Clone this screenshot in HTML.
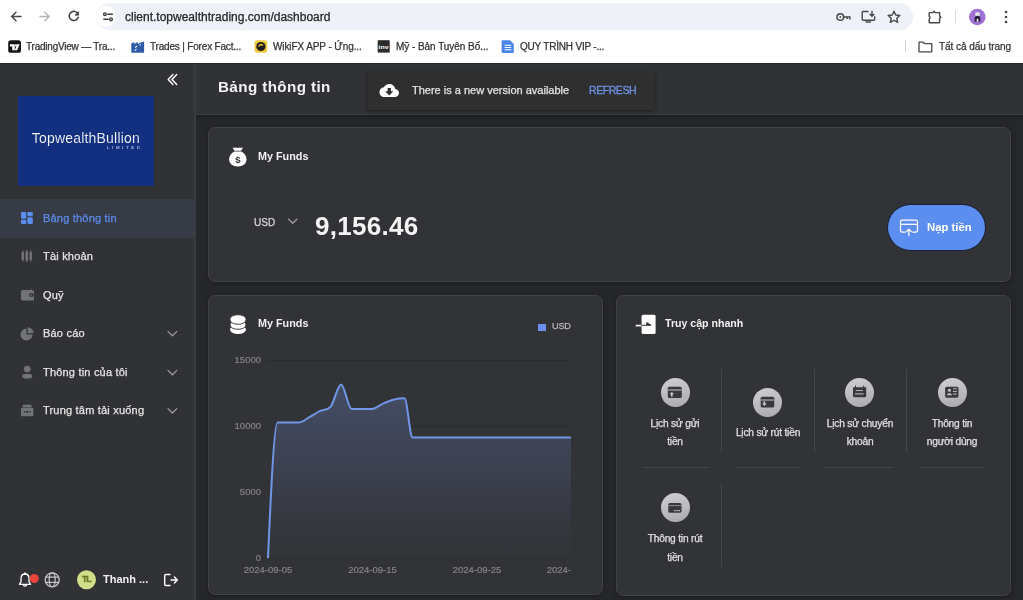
<!DOCTYPE html>
<html><head><meta charset="utf-8">
<style>
*{box-sizing:border-box;margin:0;padding:0}
html,body{width:1023px;height:600px;overflow:hidden}
body{position:relative;background:#26272b;font-family:"Liberation Sans",sans-serif;color:#fff}
.a{position:absolute}
.t{position:absolute;line-height:1;white-space:nowrap;will-change:transform;-webkit-text-stroke:0.25px currentColor}
.t[style*="font-weight:700"]{-webkit-text-stroke:0}
svg{position:absolute;overflow:visible}
</style></head><body>
<!-- ===== Browser chrome ===== -->
<div class="a" style="left:0;top:0;width:1023px;height:63px;background:#ffffff"></div>
<!-- nav buttons -->
<svg style="left:0;top:0" width="90" height="32" viewBox="0 0 90 32">
  <path d="M21 16.5H11.8M16 12.2l-4.3 4.3 4.3 4.3" fill="none" stroke="#474747" stroke-width="1.5" stroke-linecap="round" stroke-linejoin="round"/>
  <path d="M40 16.5h9.2M44.8 12.2l4.3 4.3-4.3 4.3" fill="none" stroke="#b4b4b4" stroke-width="1.5" stroke-linecap="round" stroke-linejoin="round"/>
  <path d="M78.2 17.3a4.6 4.6 0 1 1-1.1-4.6" fill="none" stroke="#474747" stroke-width="1.6" stroke-linecap="round"/>
  <path d="M78.6 11.6v3.6h-3.6z" fill="#474747" stroke="#474747" stroke-width="0.8" stroke-linejoin="round"/>
</svg>
<!-- url pill -->
<div class="a" style="left:96px;top:3px;width:817px;height:27px;border-radius:14px;background:#eef1f7"></div>
<div class="a" style="left:95.7px;top:6.2px;width:20.8px;height:20.8px;border-radius:50%;background:#fff"></div>
<svg style="left:0;top:0" width="120" height="32" viewBox="0 0 120 32">
  <circle cx="104.9" cy="14.2" r="1.35" fill="none" stroke="#3c3c3c" stroke-width="1.4"/>
  <path d="M107.8 14.2h4.6M103.8 19.3h4.4" stroke="#3c3c3c" stroke-width="1.4" stroke-linecap="round"/>
  <circle cx="111" cy="19.3" r="1.4" fill="none" stroke="#3c3c3c" stroke-width="1.4"/>
</svg>
<div class="t" style="left:124.6px;top:11px;font-size:12px;color:#1f1f1f">client.topwealthtrading.com/dashboard</div>
<!-- right toolbar icons -->
<svg style="left:820px;top:0" width="203" height="32" viewBox="820 0 203 32">
  <!-- key -->
  <circle cx="840.3" cy="17" r="3.3" fill="none" stroke="#474747" stroke-width="1.5"/>
  <circle cx="840.3" cy="17" r="0.9" fill="#474747"/>
  <path d="M843.6 17h6.2v2.6M847.2 17v2" fill="none" stroke="#474747" stroke-width="1.5"/>
  <!-- install -->
  <path d="M868.5 11.5h-5.3a1 1 0 0 0-1 1v6.8a1 1 0 0 0 1 1h10.5a1 1 0 0 0 1-1v-3" fill="none" stroke="#474747" stroke-width="1.4"/>
  <path d="M865.5 22h5.5" stroke="#474747" stroke-width="1.4"/>
  <path d="M872 10.8v5.4M869.8 14l2.2 2.2 2.2-2.2" fill="none" stroke="#474747" stroke-width="1.4"/>
  <!-- star -->
  <path d="M894 11.2l1.75 3.8 4.1.45-3.05 2.8.85 4.05L894 20.25l-3.65 2.05.85-4.05-3.05-2.8 4.1-.45z" fill="none" stroke="#474747" stroke-width="1.4" stroke-linejoin="round"/>
  <!-- puzzle -->
  <path d="M929.2 12.6h3.6l1.2-1.3 1.2 1.3h4.4v3.4l1.3 1.3-1.3 1.3v3.6a0.6 0.6 0 0 1-.6.6h-9.2a0.6 0.6 0 0 1-.6-.6v-3.2a1.5 1.5 0 0 0 0-2.6v-3.2a0.6 0.6 0 0 1 .6-.6z" fill="none" stroke="#474747" stroke-width="1.4" stroke-linejoin="round"/>
  <path d="M955.5 10v13" stroke="#d6d9de" stroke-width="1"/>
  <!-- avatar -->
  <circle cx="977.3" cy="17" r="8.3" fill="#a072d6"/>
  <circle cx="977.5" cy="14.4" r="2.4" fill="#e4e2ea"/>
  <path d="M974.6 21.8v-3.1a2.9 2.9 0 0 1 5.8 0v3.1z" fill="#2b2140"/>
  <rect x="976.7" y="18.9" width="1.7" height="2.9" fill="#efeff3"/>
  <circle cx="1006" cy="12" r="1.3" fill="#474747"/>
  <circle cx="1006" cy="17" r="1.3" fill="#474747"/>
  <circle cx="1006" cy="22" r="1.3" fill="#474747"/>
</svg>
<!-- bookmarks bar -->
<svg style="left:0;top:0" width="620" height="62" viewBox="0 0 620 62">
  <rect x="8.2" y="40.2" width="12.8" height="12.6" rx="2.6" fill="#131313"/>
  <path d="M9.9 44.3h4.9v5.9h-2.6v-3.6h-2.3z" fill="#fff"/>
  <circle cx="16" cy="45.4" r="1.05" fill="#fff"/>
  <path d="M17.1 44.3h2.6l-2.6 5.9h-2.3z" fill="#fff"/>
  <path d="M131.3 52.8V43.6l3-1.6v1.9l3.6-1.9v1.9l3.6-1.9v0.6l2.6-1.4v11.6z" fill="#2f5ba6"/>
  <path d="M135.2 47.6l1.8-1.6M134.8 50.6l1.6-1.4M139.6 45.4l1.2-1" stroke="#fff" stroke-width="1.1"/>
  <rect x="254.6" y="40.2" width="12.6" height="12.6" rx="3" fill="#f0c93a"/>
  <circle cx="260.9" cy="46.5" r="4.6" fill="#1d1d1d"/>
  <path d="M258.2 46.8a2.8 2.8 0 0 1 5.4-1.2l-1.6.2a1.3 1.3 0 0 0-2.3.8z" fill="#f0c93a"/>
  <rect x="377.7" y="40.2" width="12" height="12.4" fill="#2b2b2b"/>
  <text x="378.6" y="48.6" font-family="Liberation Sans" font-weight="700" font-size="5.4" fill="#fff" textLength="10" lengthAdjust="spacingAndGlyphs">inv</text>
  <path d="M502.6 40.2h7.4l3.8 3.8v8a1 1 0 0 1-1 1h-10.2a1 1 0 0 1-1-1v-10.8a1 1 0 0 1 1-1z" fill="#4a86e8"/>
  <path d="M504.6 45.2h6.6M504.6 47.5h6.6M504.6 49.8h6.6" stroke="#fff" stroke-width="1.1"/>
</svg>
<div class="t" style="left:26px;top:41.6px;font-size:10px;letter-spacing:-0.22px;color:#333">TradingView — Tra...</div>
<div class="t" style="left:150px;top:41.6px;font-size:10px;letter-spacing:-0.18px;color:#333">Trades | Forex Fact...</div>
<div class="t" style="left:272.5px;top:41.6px;font-size:10px;letter-spacing:-0.1px;color:#333">WikiFX APP - Ứng...</div>
<div class="t" style="left:395.5px;top:41.6px;font-size:10px;letter-spacing:-0.05px;color:#333">Mỹ - Bản Tuyên Bố...</div>
<div class="t" style="left:519.5px;top:41.6px;font-size:10px;letter-spacing:-0.2px;color:#333">QUY TRÌNH VIP -...</div>
<div class="a" style="left:905px;top:40px;width:1px;height:12px;background:#d0d4dc"></div>
<svg style="left:918px;top:41px" width="15" height="12" viewBox="0 0 15 12">
  <path d="M1 1.2h4.3l1.4 1.5h7.1v8.1H1z" fill="none" stroke="#474747" stroke-width="1.3" stroke-linejoin="round"/>
</svg>
<div class="t" style="left:938.5px;top:41.6px;font-size:10px;letter-spacing:-0.05px;color:#333">Tất cả dấu trang</div>
<div class="a" style="left:0;top:63px;width:1023px;height:1px;background:#27282b"></div>

<!-- ===== App ===== -->
<!-- sidebar -->
<div class="a" style="left:0;top:64px;width:194px;height:536px;background:#313236"></div>
<div class="a" style="left:194px;top:64px;width:2px;height:536px;background:#3a3b3f"></div>
<svg style="left:160px;top:70px" width="24" height="20" viewBox="160 70 24 20">
  <path d="M172.9 74.6l-4.7 4.9 4.7 4.9M176.7 74.6l-4.7 4.9 4.7 4.9" fill="none" stroke="#fff" stroke-width="1.4" stroke-linecap="round" stroke-linejoin="round"/>
</svg>
<div class="a" style="left:18px;top:96px;width:136px;height:90px;background:#12307f"></div>
<svg style="left:0;top:0" width="194" height="200" viewBox="0 0 194 200">
  <text x="31.8" y="143.2" font-family="Liberation Sans" font-size="14" textLength="108" lengthAdjust="spacing" fill="#ffffff" stroke="#12307f" stroke-width="0.15">TopwealthBullion</text>
  <text x="106.8" y="148.8" font-family="Liberation Sans" font-weight="700" font-size="4.3" textLength="33" lengthAdjust="spacing" fill="#aab3dc">LIMITED</text>
</svg>

<div class="a" style="left:0;top:199px;width:194px;height:39px;background:#373b45"></div>
<!-- nav icons -->
<svg style="left:0;top:0" width="194" height="600" viewBox="0 0 194 600">
  <g fill="#5b8def">
    <rect x="21" y="212" width="5.3" height="6.8" rx="1.2"/>
    <rect x="21" y="219.8" width="5.3" height="4.2" rx="1.2"/>
    <rect x="27.3" y="212" width="5.5" height="4.2" rx="1.2"/>
    <rect x="27.3" y="217.2" width="5.5" height="6.8" rx="1.2"/>
  </g>
  <g fill="#727377">
    <rect x="21.5" y="252" width="2.6" height="8" rx="0.8"/><path d="M22.8 250v12" stroke="#727377" stroke-width="0.8"/>
    <rect x="25.5" y="251" width="2.6" height="10" rx="0.8"/><path d="M26.8 249.5v13" stroke="#727377" stroke-width="0.8"/>
    <rect x="29.5" y="252" width="2.6" height="8" rx="0.8"/><path d="M30.8 250v12" stroke="#727377" stroke-width="0.8"/>
  </g>
  <g fill="#727377">
    <path d="M21 291.5a1.5 1.5 0 0 1 1.5-1.5h8.5l1 -1.5v2h1a1 1 0 0 1 1 1v8a1 1 0 0 1-1 1h-10.5a1.5 1.5 0 0 1-1.5-1.5z"/>
    <rect x="29.5" y="293.2" width="4" height="3.6" rx="1" fill="#313236"/>
    <circle cx="31.3" cy="295" r="0.8"/>
  </g>
  <g fill="#727377">
    <path d="M26.5 328.4a6 6 0 1 0 6 6h-6z"/>
    <path d="M27.7 327.2v6h6a6 6 0 0 0-6-6z"/>
  </g>
  <g fill="#727377">
    <circle cx="27.2" cy="369.1" r="3.3"/>
    <rect x="22.2" y="374.1" width="10" height="4.3" rx="2.15"/>
  </g>
  <g fill="#727377">
    <rect x="22.6" y="404.8" width="9" height="2.2" rx="0.8"/>
    <rect x="21" y="407.6" width="12.4" height="8.7" rx="1.6"/>
    <circle cx="24.6" cy="411.8" r="0.85" fill="#313236"/><rect x="26.2" y="410.9" width="2" height="1.8" fill="#313236"/><circle cx="29.8" cy="411.8" r="0.85" fill="#313236"/>
  </g>
  <g fill="none" stroke="#9a9b9f" stroke-width="1.3" stroke-linecap="round" stroke-linejoin="round">
    <path d="M168 331.4l4.4 4.4 4.4-4.4"/>
    <path d="M168 370.4l4.4 4.4 4.4-4.4"/>
    <path d="M168 408.6l4.4 4.4 4.4-4.4"/>
  </g>
</svg>
<div class="t" style="left:43px;top:212.9px;font-size:11px;letter-spacing:0.2px;color:#5b8def">Bảng thông tin</div>
<div class="t" style="left:43px;top:250.9px;font-size:11px;letter-spacing:0.2px;color:#e6e6e6">Tài khoản</div>
<div class="t" style="left:43px;top:289.9px;font-size:11px;letter-spacing:0.2px;color:#e6e6e6">Quỹ</div>
<div class="t" style="left:43px;top:327.9px;font-size:11px;letter-spacing:0.2px;color:#e6e6e6">Báo cáo</div>
<div class="t" style="left:43px;top:366.9px;font-size:11px;letter-spacing:0.2px;color:#e6e6e6">Thông tin của tôi</div>
<div class="t" style="left:43px;top:404.9px;font-size:11px;letter-spacing:0.2px;color:#e6e6e6">Trung tâm tải xuống</div>

<!-- sidebar bottom -->
<svg style="left:0;top:560px" width="194" height="40" viewBox="0 560 194 40">
  <path d="M25 574c-2.6 0-4 2-4 4.7v3.2l-1.6 2.4h11.2l-1.6-2.4v-3.2c0-2.7-1.4-4.7-4-4.7zM25 572.8v1.2M23.4 584.6a1.6 1.6 0 0 0 3.2 0" fill="none" stroke="#fff" stroke-width="1.3" stroke-linecap="round" stroke-linejoin="round"/>
  <circle cx="34.2" cy="578.5" r="4.6" fill="#e8463c"/>
  <g fill="none" stroke="#c4c4c6" stroke-width="1.3">
    <circle cx="52.2" cy="579.8" r="7"/>
    <ellipse cx="52.2" cy="579.8" rx="3" ry="7"/>
    <path d="M45.5 577.2h13.4M45.5 582.4h13.4"/>
  </g>
  <circle cx="86.5" cy="579.8" r="9.5" fill="#d3de8a"/>
  <path d="M171 580h6M174.4 577l3 3-3 3M170 574.5h-4a1.3 1.3 0 0 0-1.3 1.3v8.4a1.3 1.3 0 0 0 1.3 1.3h4" fill="none" stroke="#fff" stroke-width="1.4" stroke-linecap="round" stroke-linejoin="round"/>
</svg>
<div class="t" style="left:81.8px;top:575.2px;font-size:8.8px;font-weight:700;color:#6b7a28;letter-spacing:-1.1px;-webkit-text-stroke:0.35px #6b7a28">TL</div>
<div class="t" style="left:103px;top:574px;font-size:11px;font-weight:700;color:#f0f0f0">Thanh ...</div>

<!-- header -->
<div class="a" style="left:196px;top:64px;width:827px;height:50px;background:#313236"></div>
<div class="a" style="left:196px;top:114px;width:827px;height:1px;background:#3c3d41"></div>
<div class="a" style="left:196px;top:115px;width:827px;height:5px;background:linear-gradient(#1c1d21,#26272b)"></div>
<div class="t" style="left:218px;top:79.2px;font-size:15.2px;font-weight:700;color:#f4f4f4;letter-spacing:0.4px">Bảng thông tin</div>

<!-- snackbar -->
<div class="a" style="left:367px;top:72px;width:288px;height:38px;border-radius:2px;background:#2f2f30;box-shadow:0 1px 3px rgba(0,0,0,.45)"></div>
<svg style="left:0;top:0" width="1023" height="120" viewBox="0 0 1023 120">
  <path transform="translate(379.5 80.75) scale(0.8125)" d="M19.35 10.04C18.67 6.59 15.64 4 12 4 9.110 4 6.6 5.64 5.35 8.04 2.34 8.36 0 10.91 0 14c0 3.31 2.690 6 6 6h13c2.76 0 5-2.24 5-5 0-2.64-2.05-4.78-4.65-4.96zM17 13l-5 5-5-5h3V9h4v4h3z" fill="#fff"/>
</svg>
<div class="t" style="left:412px;top:84.8px;font-size:11px;color:#e4e4e4">There is a new version available</div>
<div class="t" style="left:588.8px;top:84.6px;font-size:10.6px;color:#6d93e6;letter-spacing:-0.5px;-webkit-text-stroke:0.3px #6d93e6">REFRESH</div>

<!-- card 1 -->
<div class="a" style="left:208px;top:127px;width:803px;height:155px;border-radius:7px;background:#323337;border:1px solid #424347;box-shadow:0 1px 5px rgba(0,0,0,.3)"></div>
<svg style="left:0;top:0" width="300" height="200" viewBox="0 0 300 200">
  <path d="M232.6 147.6c1.4.3 2.6.3 3.4 0 .7.6 2.9.6 3.6 0 .9.3 2 .3 3.4 0l-1.8 3.2h-6.8z" fill="#fff"/>
  <path d="M234.3 151.4h7c3.4 1.6 5.2 4.8 5.2 7.8 0 4.4-3.5 7.2-8.7 7.2s-8.7-2.8-8.7-7.2c0-3 1.8-6.2 5.2-7.8z" fill="#fff"/>
  <text x="237.8" y="162.8" text-anchor="middle" font-family="Liberation Sans" font-weight="700" font-size="9.5" fill="#323337">$</text>
</svg>
<div class="t" style="left:257.5px;top:150.5px;font-size:10.8px;font-weight:700;color:#f2f2f2">My Funds</div>
<div class="t" style="left:254px;top:218px;font-size:10px;color:#d8d8d8">USD</div>
<svg style="left:286px;top:215px" width="14" height="12" viewBox="286 215 14 12">
  <path d="M288.6 219.2l4.1 4.1 4.1-4.1" fill="none" stroke="#9a9b9f" stroke-width="1.3" stroke-linecap="round" stroke-linejoin="round"/>
</svg>
<div class="t" style="left:314.9px;top:213px;font-size:26px;font-weight:700;color:#f4f4f4;letter-spacing:0.3px">9,156.46</div>
<div class="a" style="left:888px;top:205px;width:97px;height:45px;border-radius:23px;background:#5c8ef0;box-shadow:0 0 0 1px rgba(18,28,58,.75)"></div>
<svg style="left:0;top:0" width="1023" height="300" viewBox="0 0 1023 300">
  <path d="M905.3 232h-3.2a1.6 1.6 0 0 1-1.6-1.6v-8.6a1.6 1.6 0 0 1 1.6-1.6h13.8a1.6 1.6 0 0 1 1.6 1.6v8.6a1.6 1.6 0 0 1-1.6 1.6h-3.2" fill="none" stroke="#fff" stroke-width="1.25" stroke-linecap="round"/>
  <path d="M900.5 224.3h17" stroke="#fff" stroke-width="1.25"/>
  <path d="M908.9 235.6v-6.3M906.6 231.5l2.3-2.3 2.3 2.3" fill="none" stroke="#fff" stroke-width="1.25" stroke-linecap="round" stroke-linejoin="round"/>
</svg>
<div class="t" style="left:926.8px;top:221.5px;font-size:11.3px;font-weight:700;color:#fff">Nạp tiền</div>

<!-- card 2 chart -->
<div class="a" style="left:208px;top:295px;width:395px;height:300px;border-radius:7px;background:#323337;border:1px solid #424347;box-shadow:0 1px 5px rgba(0,0,0,.3)"></div>
<svg style="left:0;top:0" width="300" height="400" viewBox="0 0 300 400">
  <ellipse cx="238" cy="329.6" rx="8" ry="4.5" fill="#fff"/>
  <ellipse cx="238" cy="324.8" rx="8" ry="4.5" fill="#fff" stroke="#323337" stroke-width="0.9"/>
  <ellipse cx="238" cy="319.5" rx="8.1" ry="4.8" fill="#fff" stroke="#323337" stroke-width="0.9"/>
</svg>
<div class="t" style="left:257.5px;top:317.5px;font-size:10.8px;font-weight:700;color:#f2f2f2">My Funds</div>
<div class="a" style="left:538px;top:324px;width:8px;height:7px;background:#6b8ff0"></div>
<div class="t" style="left:552.4px;top:321.8px;font-size:9.2px;letter-spacing:-0.2px;color:#b8b8b8">USD</div>
<svg style="left:0;top:0" width="1023" height="600" viewBox="0 0 1023 600">
  <defs>
    <linearGradient id="g1" x1="0" y1="380" x2="0" y2="558" gradientUnits="userSpaceOnUse">
      <stop offset="0" stop-color="#4d5a7c" stop-opacity="0.72"/>
      <stop offset="0.55" stop-color="#454d66" stop-opacity="0.5"/>
      <stop offset="1" stop-color="#3a3d48" stop-opacity="0.12"/>
    </linearGradient>
  </defs>
  <g stroke="#2a2b2e" stroke-width="1">
    <path d="M268 360.5H571M268 426.5H571M268 492.5H571M268 558.5H571"/>
  </g>
  <path d="M268.00,558.30 C271.17,485.82 274.33,422.40 277.50,422.40 C281.30,422.40 285.10,422.40 288.90,422.40 C292.38,422.40 295.87,422.40 299.35,422.40 C302.83,422.40 306.32,418.76 309.80,416.85 C313.28,414.93 316.77,412.48 320.25,410.90 C323.73,409.31 327.22,410.60 330.70,406.53 C334.18,402.47 337.67,384.46 341.15,384.46 C344.63,384.46 348.12,408.91 351.60,408.91 C355.08,408.91 358.57,408.91 362.05,408.91 C365.53,408.91 369.02,408.91 372.50,408.91 C375.98,408.91 379.47,405.17 382.95,403.63 C386.43,402.08 389.92,400.53 393.40,399.66 C397.10,398.74 400.80,398.34 404.50,398.34 C407.17,398.34 409.83,437.60 412.50,437.60 C416.58,437.60 420.67,437.60 424.75,437.60 C428.23,437.60 431.72,437.60 435.20,437.60 C438.68,437.60 442.17,437.60 445.65,437.60 C449.13,437.60 452.62,437.60 456.10,437.60 C459.58,437.60 463.07,437.60 466.55,437.60 C470.03,437.60 473.52,437.60 477.00,437.60 C480.48,437.60 483.97,437.60 487.45,437.60 C490.93,437.60 494.42,437.60 497.90,437.60 C501.38,437.60 504.87,437.60 508.35,437.60 C511.83,437.60 515.32,437.60 518.80,437.60 C522.28,437.60 525.77,437.60 529.25,437.60 C532.73,437.60 536.22,437.60 539.70,437.60 C543.18,437.60 546.67,437.60 550.15,437.60 C553.63,437.60 557.12,437.60 560.60,437.60 C564.07,437.60 567.53,437.60 571.00,437.60 L571.00,558.30 L268.00,558.30 Z" fill="url(#g1)"/>
  <path d="M268.00,558.30 C271.17,485.82 274.33,422.40 277.50,422.40 C281.30,422.40 285.10,422.40 288.90,422.40 C292.38,422.40 295.87,422.40 299.35,422.40 C302.83,422.40 306.32,418.76 309.80,416.85 C313.28,414.93 316.77,412.48 320.25,410.90 C323.73,409.31 327.22,410.60 330.70,406.53 C334.18,402.47 337.67,384.46 341.15,384.46 C344.63,384.46 348.12,408.91 351.60,408.91 C355.08,408.91 358.57,408.91 362.05,408.91 C365.53,408.91 369.02,408.91 372.50,408.91 C375.98,408.91 379.47,405.17 382.95,403.63 C386.43,402.08 389.92,400.53 393.40,399.66 C397.10,398.74 400.80,398.34 404.50,398.34 C407.17,398.34 409.83,437.60 412.50,437.60 C416.58,437.60 420.67,437.60 424.75,437.60 C428.23,437.60 431.72,437.60 435.20,437.60 C438.68,437.60 442.17,437.60 445.65,437.60 C449.13,437.60 452.62,437.60 456.10,437.60 C459.58,437.60 463.07,437.60 466.55,437.60 C470.03,437.60 473.52,437.60 477.00,437.60 C480.48,437.60 483.97,437.60 487.45,437.60 C490.93,437.60 494.42,437.60 497.90,437.60 C501.38,437.60 504.87,437.60 508.35,437.60 C511.83,437.60 515.32,437.60 518.80,437.60 C522.28,437.60 525.77,437.60 529.25,437.60 C532.73,437.60 536.22,437.60 539.70,437.60 C543.18,437.60 546.67,437.60 550.15,437.60 C553.63,437.60 557.12,437.60 560.60,437.60 C564.07,437.60 567.53,437.60 571.00,437.60" fill="none" stroke="#7097e6" stroke-width="2"/>
  <g font-family="Liberation Sans" font-size="9.5" fill="#838488" stroke="#838488" stroke-width="0.2">
    <text x="261" y="363" text-anchor="end">15000</text>
    <text x="261" y="429" text-anchor="end">10000</text>
    <text x="261" y="495" text-anchor="end">5000</text>
    <text x="261" y="560.5" text-anchor="end">0</text>
    <text x="268" y="573" text-anchor="middle">2024-09-05</text>
    <text x="372.5" y="573" text-anchor="middle">2024-09-15</text>
    <text x="477" y="573" text-anchor="middle">2024-09-25</text>
    <text x="571" y="573" text-anchor="end">2024-</text>
  </g>
</svg>

<!-- card 3 quick access -->
<div class="a" style="left:616px;top:295px;width:395px;height:301px;border-radius:7px;background:#323337;border:1px solid #424347;box-shadow:0 1px 5px rgba(0,0,0,.3)"></div>
<svg style="left:0;top:0" width="700" height="400" viewBox="0 0 700 400">
  <rect x="641.6" y="314.7" width="14" height="19.4" rx="1.5" fill="#fff"/>
  <path d="M635.7 325.6h6" stroke="#fff" stroke-width="1.7"/>
  <path d="M641.4 325.2h9.4l-4-2.5v2.5z" fill="#323337" stroke="#323337" stroke-width="1.1" stroke-linejoin="round"/>
</svg>
<div class="t" style="left:665px;top:318px;font-size:10.6px;font-weight:700;color:#f2f2f2">Truy cập nhanh</div>

<!-- dividers -->
<div class="a" style="left:721px;top:369px;width:1px;height:83px;background:#45464a"></div>
<div class="a" style="left:813.5px;top:369px;width:1px;height:83px;background:#45464a"></div>
<div class="a" style="left:905.5px;top:369px;width:1px;height:83px;background:#45464a"></div>
<div class="a" style="left:721px;top:484px;width:1px;height:83px;background:#45464a"></div>
<div class="a" style="left:642px;top:467px;width:66px;height:1px;background:#45464a"></div>
<div class="a" style="left:735.5px;top:467px;width:65px;height:1px;background:#45464a"></div>
<div class="a" style="left:825px;top:467px;width:67px;height:1px;background:#45464a"></div>
<div class="a" style="left:920px;top:467px;width:64px;height:1px;background:#45464a"></div>

<!-- item circles -->
<div class="a" style="left:660.5px;top:378px;width:29px;height:29px;border-radius:50%;background:linear-gradient(165deg,#d0d0d2,#a8a9ac)"></div>
<div class="a" style="left:753px;top:387.5px;width:29px;height:29px;border-radius:50%;background:linear-gradient(165deg,#d0d0d2,#a8a9ac)"></div>
<div class="a" style="left:845px;top:378px;width:29px;height:29px;border-radius:50%;background:linear-gradient(165deg,#d0d0d2,#a8a9ac)"></div>
<div class="a" style="left:937.5px;top:378px;width:29px;height:29px;border-radius:50%;background:linear-gradient(165deg,#d0d0d2,#a8a9ac)"></div>
<div class="a" style="left:660.5px;top:493px;width:29px;height:29px;border-radius:50%;background:linear-gradient(165deg,#d0d0d2,#a8a9ac)"></div>
<svg style="left:0;top:0" width="1023" height="600" viewBox="0 0 1023 600">
  <g fill="#38393d">
    <rect x="667.8" y="386.7" width="14" height="11.3" rx="1.6"/>
    <rect x="760.7" y="396.7" width="13.6" height="10.8" rx="1.6"/>
    <path d="M853 387.3h2v-1.8h1v1.8h7.2v-1.8h1v1.8h2a0 0 0 0 1 0 0v8.5a1.5 1.5 0 0 1-1.5 1.5h-10.2a1.5 1.5 0 0 1-1.5-1.5z"/>
    <rect x="945.1" y="386.8" width="13.4" height="10.9" rx="1.6"/>
    <rect x="668.3" y="503" width="13.2" height="9.8" rx="1.6"/>
  </g>
  <g fill="#8e8f93">
    <rect x="667.8" y="389.2" width="14" height="1.6"/>
    <rect x="760.7" y="399.2" width="13.6" height="1.6"/>
    <rect x="668.3" y="505.1" width="13.2" height="1"/>
  </g>
  <g fill="#c6c6c8">
    <path d="M671.8 391.9l-2.4 2.4h1.6v2.4h1.6v-2.4h1.6z"/>
    <path d="M763.6 401.2v2.4h-1.6l2.4 2.4 2.4-2.4h-1.6v-2.4z"/>
    <rect x="855.8" y="390" width="6.8" height="0.9"/>
    <rect x="855" y="393.4" width="8.6" height="1"/>
    <circle cx="949.4" cy="390.3" r="1.5"/>
    <path d="M946.9 395.2a2.5 1.9 0 0 1 5 0z"/>
    <rect x="952.9" y="388.4" width="4" height="0.9"/><rect x="952.9" y="391" width="4" height="0.9"/><rect x="952.9" y="393.6" width="4" height="0.9"/>
    <rect x="674.2" y="510" width="1.5" height="1.2"/><rect x="676.3" y="510" width="1.5" height="1.2"/><rect x="678.4" y="510" width="1.6" height="1.2"/>
  </g>
</svg>
<div class="t" style="left:675px;top:418.6px;font-size:10.2px;letter-spacing:-0.2px;color:#e0e0e0;width:0;display:flex;justify-content:center">Lịch sử gửi</div>
<div class="t" style="left:675px;top:437.1px;font-size:10.2px;letter-spacing:-0.2px;color:#e0e0e0;width:0;display:flex;justify-content:center">tiền</div>
<div class="t" style="left:767.5px;top:427.6px;font-size:10.2px;letter-spacing:-0.2px;color:#e0e0e0;width:0;display:flex;justify-content:center">Lịch sử rút tiền</div>
<div class="t" style="left:859.5px;top:418.6px;font-size:10.2px;letter-spacing:-0.2px;color:#e0e0e0;width:0;display:flex;justify-content:center">Lịch sử chuyển</div>
<div class="t" style="left:859.5px;top:437.1px;font-size:10.2px;letter-spacing:-0.2px;color:#e0e0e0;width:0;display:flex;justify-content:center">khoản</div>
<div class="t" style="left:952px;top:418.6px;font-size:10.2px;letter-spacing:-0.2px;color:#e0e0e0;width:0;display:flex;justify-content:center">Thông tin</div>
<div class="t" style="left:952px;top:437.1px;font-size:10.2px;letter-spacing:-0.2px;color:#e0e0e0;width:0;display:flex;justify-content:center">người dùng</div>
<div class="t" style="left:675px;top:534.1px;font-size:10.2px;letter-spacing:-0.2px;color:#e0e0e0;width:0;display:flex;justify-content:center">Thông tin rút</div>
<div class="t" style="left:675px;top:553.1px;font-size:10.2px;letter-spacing:-0.2px;color:#e0e0e0;width:0;display:flex;justify-content:center">tiền</div>
</body></html>
